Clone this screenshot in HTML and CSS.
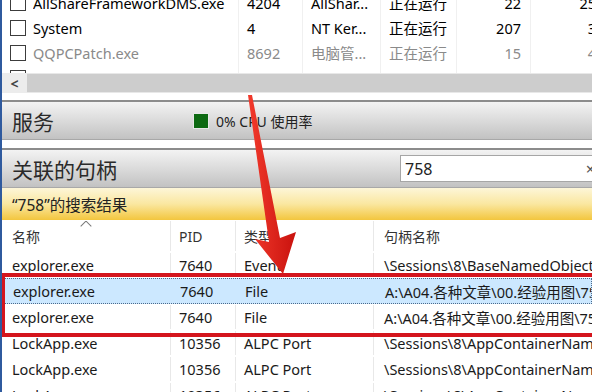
FILE: index.html
```html
<!DOCTYPE html>
<html lang="zh">
  <head>
    <meta charset="UTF-8" />
    <meta name="viewport" content="width=device-width, initial-scale=1.0" />
    <title>资源监视器 - 关联的句柄</title>
    <link rel="stylesheet" href="styles.css">
  </head>
  <body>
    <div class="window">
      <div class="proc-list">
        <div class="proc-row first">
          <span class="cb"><i></i></span>
          <span class="c-name">AllShareFrameworkDMS.exe</span>
          <span class="c-pid">4204</span>
          <span class="c-desc">AllShar...</span>
          <span class="c-status">正在运行</span>
          <span class="c-num">22</span>
          <span class="c-num">25</span>
        </div>
        <div class="proc-row">
          <span class="cb"><i></i></span>
          <span class="c-name">System</span>
          <span class="c-pid">4</span>
          <span class="c-desc">NT Ker...</span>
          <span class="c-status">正在运行</span>
          <span class="c-num">207</span>
          <span class="c-num">3</span>
        </div>
        <div class="proc-row dim">
          <span class="cb"><i></i></span>
          <span class="c-name">QQPCPatch.exe</span>
          <span class="c-pid">8692</span>
          <span class="c-desc">电脑管...</span>
          <span class="c-status">正在运行</span>
          <span class="c-num">15</span>
          <span class="c-num">4</span>
        </div>
        <div class="proc-row">
          <span class="cb"><i></i></span>
          <span class="c-name"></span>
          <span class="c-pid"></span>
          <span class="c-desc"></span>
          <span class="c-status"></span>
          <span class="c-num"></span>
          <span class="c-num"></span>
        </div>
      </div>

      <div class="hscroll">
        <span class="scroll-btn">&lt;</span>
        <span class="scroll-thumb"></span>
      </div>

      <div class="section">
        <h2>服务</h2>
        <span class="cpu-box"></span>
        <span class="cpu-text">0% CPU 使用率</span>
      </div>

      <div class="section handles-head">
        <h2>关联的句柄</h2>
        <div class="search">
          <span>758</span>
          <span class="clear">×</span>
        </div>
      </div>

      <div class="results-bar">“758”的搜索结果</div>

      <div class="handles">
        <div class="h-row h-header">
          <span class="h-name sorted"><i class="caret"></i>名称</span>
          <span class="h-pid">PID</span>
          <span class="h-type">类型</span>
          <span class="h-path">句柄名称</span>
        </div>
        <div class="h-row">
          <span class="h-name">explorer.exe</span>
          <span class="h-pid">7640</span>
          <span class="h-type">Event</span>
          <span class="h-path">\Sessions\8\BaseNamedObjects\</span>
        </div>
        <div class="h-row selected">
          <span class="h-name">explorer.exe</span>
          <span class="h-pid">7640</span>
          <span class="h-type">File</span>
          <span class="h-path">A:\A04.各种文章\00.经验用图\758</span>
        </div>
        <div class="h-row">
          <span class="h-name">explorer.exe</span>
          <span class="h-pid">7640</span>
          <span class="h-type">File</span>
          <span class="h-path">A:\A04.各种文章\00.经验用图\758</span>
        </div>
        <div class="h-row">
          <span class="h-name">LockApp.exe</span>
          <span class="h-pid">10356</span>
          <span class="h-type">ALPC Port</span>
          <span class="h-path">\Sessions\8\AppContainerNamedObjects\</span>
        </div>
        <div class="h-row">
          <span class="h-name">LockApp.exe</span>
          <span class="h-pid">10356</span>
          <span class="h-type">ALPC Port</span>
          <span class="h-path">\Sessions\8\AppContainerNamedObjects\</span>
        </div>
        <div class="h-row">
          <span class="h-name">LockApp.exe</span>
          <span class="h-pid">10356</span>
          <span class="h-type">ALPC Port</span>
          <span class="h-path">\Sessions\8\AppContainerNamedObjects\</span>
        </div>
      </div>

      <!-- annotation drawn over the screenshot -->
      <div class="red-box"></div>
      <svg class="arrow" width="592" height="392" viewBox="0 0 592 392">
        <defs>
          <linearGradient id="arrowFill" x1="0" y1="0" x2="1" y2="0">
            <stop offset="0" stop-color="#f23a2c" />
            <stop offset="1" stop-color="#c9120e" />
          </linearGradient>
        </defs>
        <polygon
          points="248,95 252,95 280,238 296,232 283,274 255,239 269,242"
          fill="url(#arrowFill)"
        />
      </svg>
    </div>
  </body>
</html>
```

FILE: styles.css
```css
body {
  margin: 0;
  padding: 0;
  background: #fff;
  font-family: "Noto Sans", "Noto Sans CJK SC", sans-serif;
  color: #1a1a1a;
}
.window {
  position: relative;
  width: 590px;
  height: 392px;
  overflow: hidden;
  border-left: 2px solid #2f5a9e;
  background: #fff;
}

/* process list (top) */
.proc-list {
  height: 73px;
  overflow: hidden;
}
.proc-row {
  display: grid;
  grid-template-columns: 31px 205px 64px 78px 76px 74px 75px;
  height: 25px;
  align-items: stretch;
  font-size: 14.5px;
  color: #000;
  width: 603px;
}
.proc-row.first {
  margin-top: -10px;
}
.proc-row.dim {
  color: #8a8a8a;
}
.proc-row span {
  display: flex;
  align-items: center;
  white-space: nowrap;
  overflow: hidden;
}
.cb i {
  display: block;
  width: 14px;
  height: 14px;
  margin-left: 8px;
  border: 1px solid #3c3c3c;
  background: #fff;
}
.c-pid,
.c-desc,
.c-status,
.c-num {
  border-left: 1px solid #f0f0f0;
  padding-left: 8px;
}
.c-num {
  justify-content: flex-end;
  padding-right: 9px;
}

/* horizontal scrollbar */
.hscroll {
  display: flex;
  height: 20px;
  background: #e8e8e8;
}
.scroll-btn {
  width: 25px;
  display: flex;
  align-items: center;
  justify-content: center;
  font-size: 14px;
  font-weight: bold;
  color: #444;
  background: #ececec;
}
.scroll-thumb {
  flex: 1;
  margin: 1px 0;
  background: #cdcdcd;
}

/* section headers */
.section {
  display: flex;
  align-items: center;
  height: 37px;
  margin-top: 7px;
  padding-left: 10px;
  border-top: 2px solid #8c8c8c;
  border-bottom: 1px solid #a8a8a8;
  background: linear-gradient(#f3f3f3, #d6d6d6 60%, #c2c2c2);
}
.section + .section {
  margin-top: 8px;
}
.section h2 {
  margin: 0;
  width: 181px;
  font-size: 21px;
  font-weight: normal;
  color: #2a2a2a;
}
.cpu-box {
  width: 14px;
  height: 14px;
  border: 1px solid #e8e8e8;
  background: #0d6a12;
}
.cpu-text {
  margin-left: 7px;
  font-size: 14px;
  color: #222;
}
.search {
  display: flex;
  align-items: center;
  justify-content: space-between;
  margin-left: auto;
  margin-right: -6px;
  width: 190px;
  height: 25px;
  padding: 0 2px 0 4px;
  border: 1px solid #a6a6a6;
  background: #fff;
  font-size: 16px;
  color: #222;
}
.search .clear {
  font-size: 16px;
  color: #555;
}

/* yellow results banner */
.results-bar {
  height: 32px;
  display: flex;
  align-items: center;
  padding-left: 10px;
  font-size: 15.5px;
  color: #222;
  background: linear-gradient(#fdf6d8, #fae7a0 50%, #f3c63e);
}

/* handles table */
.h-row {
  display: grid;
  grid-template-columns: 168px 65px 138px 1fr;
  height: 26px;
  font-size: 14.5px;
  color: #1a1a1a;
  border: 1px solid transparent;
  border-left: 0;
  border-right: 0;
  box-sizing: border-box;
}
.h-row span {
  display: flex;
  align-items: center;
  white-space: nowrap;
  overflow: hidden;
  padding-left: 8px;
}
.h-row .h-name {
  padding-left: 10px;
}
.h-row .h-pid,
.h-row .h-type,
.h-row .h-path {
  border-left: 1px solid #e8e8e8;
}
.h-row .h-path {
  padding-left: 10px;
}
.h-header {
  height: 32px;
  color: #333;
  font-size: 14px;
}
.h-header .sorted {
  position: relative;
}
.caret {
  position: absolute;
  top: 1px;
  left: 80px;
  width: 7px;
  height: 7px;
  border-left: 1px solid #777;
  border-top: 1px solid #777;
  transform: rotate(45deg);
}
.h-row.selected {
  background: #cce8ff;
  border: 1px dotted #4d6b8c;
}
.h-row.selected span {
  border-left-color: #cce8ff;
}

/* annotation overlay */
.red-box {
  position: absolute;
  left: -1px;
  top: 273px;
  width: 600px;
  height: 56px;
  border: 4px solid #d4151d;
}
.arrow {
  position: absolute;
  left: -2px;
  top: 0;
}
```
